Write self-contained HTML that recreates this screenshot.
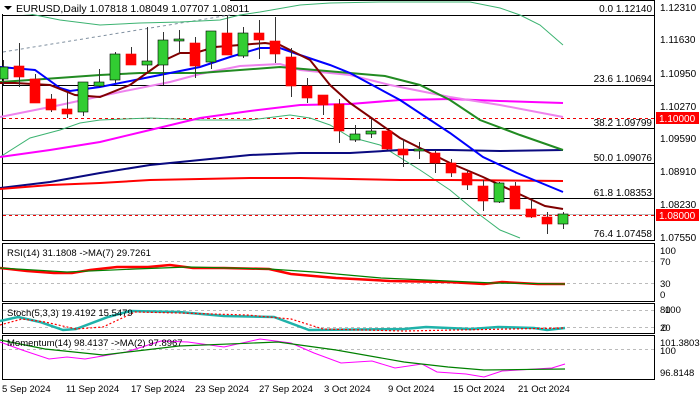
<!DOCTYPE html><html><head><style>body{margin:0;background:#fff}svg{display:block;font-family:"Liberation Sans",sans-serif}</style></head><body>
<svg width="700" height="400" xmlns="http://www.w3.org/2000/svg">
<rect width="700" height="400" fill="#fff"/>
<g stroke="#000" fill="none" stroke-width="1">
<rect x="2.5" y="0.5" width="652" height="240"/>
<rect x="2.5" y="243.5" width="652" height="58"/>
<rect x="2.5" y="303.5" width="652" height="30"/>
<rect x="2.5" y="335.5" width="652" height="44"/>
<path d="M3 15.5H654M3 85.5H654M3 128.5H654M3 163.5H654M3 198.5H654"/>
</g>
<path d="M3 214.5H654" stroke="#bbb"/>
<path d="M3 118.5H654M3 215.5H654" stroke="#e00" stroke-dasharray="3,3"/>
<path d="M3 52L230 15" stroke="#8090a0" stroke-dasharray="3,3"/>
<g fill="none" stroke-width="1" stroke="#3cb371">
<polyline points="0,12 30,14 60,20 100,25 140,23 180,22 220,20 240,15 260,12 300,5 330,3 380,2 470,2 500,8 520,15 540,25 563,45"/>
<polyline points="0,157 30,138 60,130 80,123 100,120 150,118 200,120 250,120 290,115 310,118 330,125 350,137 380,145 420,170 450,190 480,215 500,230 520,238"/>
</g>
<g fill="none" stroke-width="2">
<polyline stroke="#0a0a80" points="0,188 50,182 100,173 150,165 200,160 250,155 300,153 350,153 400,150 450,150 500,151 563,150"/>
<polyline stroke="#f00" points="0,189 50,185 100,183 150,180 200,179 250,178 300,178 350,179 400,180 450,180 563,181"/>
<polyline stroke="#f0f" points="0,157 50,150 100,142 150,130 200,118 250,111 300,105 350,104 400,100 450,99 500,101 563,103"/>
<polyline stroke="#ee82ee" points="0,117 60,105 120,92 170,82 200,74 240,66 280,64 300,70 350,75 390,85 450,97 500,105 563,117"/>
<polyline stroke="#228b22" points="0,82 30,80 100,75 140,73 200,73 240,70 280,67 350,73 385,76 420,85 450,100 480,120 520,135 563,150"/>
<polyline stroke="#00f" points="0,67 35,70 60,88 70,91 100,87 150,77 200,67 230,57 260,48 280,48 300,55 330,65 350,73 400,100 450,133 483,157 517,173 563,192"/>
<polyline stroke="#800000" points="0,83 15,83 50,85 75,95 100,97 130,85 165,60 180,53 195,53 215,47 240,45 265,43 280,45 310,60 330,85 350,103 400,138 450,163 483,177 517,193 545,206 563,209"/>
</g>
<g id="c" stroke="#000" stroke-width="1"></g>
<g stroke="#333" stroke-width="1">
<path d="M3.5 60V85M19.5 43V87M35.5 74V103M51.5 94V112M67.5 93V118M83.5 82V116M99.5 69V87M115.5 52V83M131.5 47V65M147.5 27V72M163.5 32V85M179.5 30V53M195.5 37V78M211.5 31V69M227.5 15V55M243.5 27V58M259.5 20V59M275.5 17V63M291.5 48V97M307.5 78V103M323.5 95V115M339.5 99V143M355.5 125V142M371.5 119V138M387.5 131V150M403.5 139V167M419.5 142V159M435.5 150V173M451.5 159V177M467.5 170V190M483.5 180V211M499.5 182V203M515.5 182V209M531.5 200V218M547.5 212V234M563.5 212V229"/>
</g>
<g stroke="#000" stroke-width="0.6">
<g fill="#32cd32">
<rect x="0" y="67" width="8" height="12"/><rect x="78" y="82" width="10" height="30"/><rect x="94" y="82" width="10" height="4"/><rect x="110" y="54" width="10" height="26"/><rect x="142" y="61" width="10" height="4"/><rect x="158" y="40" width="10" height="25"/><rect x="174" y="39" width="10" height="2"/><rect x="206" y="31" width="10" height="31"/><rect x="238" y="33" width="10" height="23"/><rect x="350" y="134" width="10" height="6"/><rect x="366" y="131" width="10" height="3"/><rect x="414" y="149" width="10" height="2"/><rect x="494" y="183" width="10" height="19"/><rect x="558" y="214" width="10" height="10"/>
</g>
<g fill="#f00" stroke="#f00">
<rect x="14" y="66" width="10" height="11"/><rect x="30" y="79" width="10" height="24"/><rect x="46" y="99" width="10" height="11"/><rect x="62" y="109" width="10" height="5"/><rect x="126" y="54" width="10" height="11"/><rect x="190" y="43" width="10" height="23"/><rect x="222" y="33" width="10" height="22"/><rect x="254" y="33" width="10" height="7"/><rect x="270" y="41" width="10" height="13"/><rect x="286" y="57" width="10" height="29"/><rect x="302" y="86" width="10" height="12"/><rect x="318" y="95" width="10" height="10"/><rect x="334" y="104" width="10" height="27"/><rect x="382" y="131" width="10" height="18"/><rect x="398" y="149" width="10" height="6"/><rect x="430" y="153" width="10" height="10"/><rect x="446" y="163" width="10" height="10"/><rect x="462" y="173" width="10" height="12"/><rect x="478" y="186" width="10" height="15"/><rect x="510" y="186" width="10" height="23"/><rect x="526" y="209" width="10" height="8"/><rect x="542" y="217" width="10" height="7"/>
</g></g>
<rect x="0" y="0" width="230" height="14" fill="#fff"/>
<path d="M4 6h8l-4 4z" fill="#000"/>
<text x="16" y="12" font-size="10.5">EURUSD,Daily  1.07818 1.08049 1.07707 1.08011</text>
<g font-size="10" text-anchor="end">
<text x="652" y="12">0.0 1.12140</text><text x="652" y="82">23.6 1.10694</text><text x="652" y="126">38.2 1.09799</text><text x="652" y="161">50.0 1.09076</text><text x="652" y="196">61.8 1.08353</text><text x="652" y="237">76.4 1.07458</text>
</g>
<g font-size="10">
<text x="660" y="11">1.12310</text><text x="660" y="43">1.11630</text><text x="660" y="77">1.10950</text><text x="660" y="110">1.10270</text><text x="660" y="142">1.09590</text><text x="660" y="175">1.08910</text><text x="660" y="208">1.08230</text><text x="660" y="241">1.07550</text>
</g>
<rect x="656" y="112" width="43" height="12" fill="#f00"/><text x="659" y="122" font-size="10" fill="#fff">1.10000</text>
<rect x="656" y="209" width="43" height="12" fill="#f00"/><text x="659" y="219" font-size="10" fill="#fff">1.08000</text>
<path d="M3 261.5H654M3 283.5H654M3 310.5H654M3 327.5H654M3 349.5H654" stroke="#bbb" stroke-dasharray="3,3"/>
<polyline fill="none" stroke="#f00" stroke-width="2.5" points="0,268 27,271 54,273 72,273 90,270 117,267 148,267 170,265 193,268 224,268 269,269 291,274 336,278 390,281 448,282 484,284 502,282 538,284 565,284"/>
<polyline fill="none" stroke="#008000" stroke-width="1.2" points="0,268 67,272 135,269 188,267 269,269 314,272 381,278 448,281 493,283 565,284"/>
<polyline fill="none" stroke="#20b2aa" stroke-width="2.5" points="0,321 18,317 40,322 63,330 76,329 108,317 130,311 179,312 224,316 274,317 309,330 404,329 426,327 471,329 498,327 534,328 547,330 565,328"/>
<polyline fill="none" stroke="#f00" stroke-width="1.2" stroke-dasharray="2,2" points="0,325 22,319 45,322 76,329 103,327 135,312 179,313 247,315 291,319 323,329 404,331 565,328"/>
<polyline fill="none" stroke="#f0f" stroke-width="1" points="0,342 22,350 49,359 67,357 85,359 126,352 161,341 188,342 224,347 260,339 291,343 314,353 341,363 372,361 395,368 422,364 437,372 466,374 484,377 502,371 552,368 565,364"/>
<polyline fill="none" stroke="#008000" stroke-width="1.2" points="0,340 45,349 103,355 179,346 278,342 336,350 404,362 448,367 484,370 565,369"/>
<g font-size="9.5">
<text x="7" y="256">RSI(14) 31.1808  -&gt;MA(7) 29.7261</text>
<text x="7" y="316">Stoch(5,3,3) 19.4192 15.5479</text>
<text x="7" y="346">Momentum(14) 98.4137  -&gt;MA(2) 97.8967</text>
<text x="660" y="254">100</text><text x="660" y="265">70</text><text x="660" y="287">30</text><text x="660" y="298">0</text>
<text x="660" y="313">80</text><text x="665" y="313">100</text><text x="660" y="331">20</text><text x="662" y="331">0</text>
<text x="660" y="346">101.3803</text><text x="660" y="354">100</text><text x="660" y="376">96.8148</text>
</g>
<g font-size="9.5">
<text x="2" y="392">5 Sep 2024</text><text x="66" y="392">11 Sep 2024</text><text x="131" y="392">17 Sep 2024</text><text x="195" y="392">23 Sep 2024</text><text x="259" y="392">27 Sep 2024</text><text x="324" y="392">3 Oct 2024</text><text x="388" y="392">9 Oct 2024</text><text x="453" y="392">15 Oct 2024</text><text x="518" y="392">21 Oct 2024</text>
</g>
</svg>
</body></html>
